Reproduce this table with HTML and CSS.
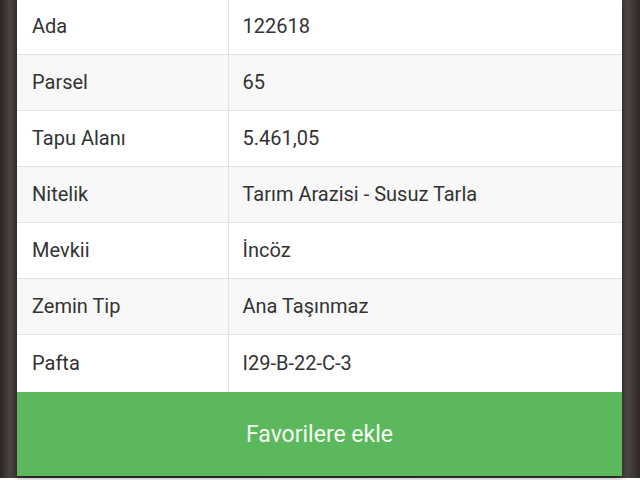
FILE: index.html
```html
<!DOCTYPE html>
<html lang="tr">
  <head>
    <meta charset="UTF-8" />
    <meta name="viewport" content="width=device-width, initial-scale=1.0" />
    <title>Parsel Bilgisi</title>
    <link rel="stylesheet" href="styles.css">
  </head>
  <body>
    <div class="backdrop">
      <div class="card">
        <table class="info-table">
          <tbody>
            <tr><td>Ada</td><td>122618</td></tr>
            <tr><td>Parsel</td><td>65</td></tr>
            <tr><td>Tapu Alanı</td><td>5.461,05</td></tr>
            <tr><td>Nitelik</td><td>Tarım Arazisi - Susuz Tarla</td></tr>
            <tr><td>Mevkii</td><td>İncöz</td></tr>
            <tr><td>Zemin Tip</td><td>Ana Taşınmaz</td></tr>
            <tr><td>Pafta</td><td>I29-B-22-C-3</td></tr>
          </tbody>
        </table>
        <button class="fav-btn">Favorilere ekle</button>
      </div>
    </div>
  </body>
</html>
```

FILE: styles.css
```css
* {
  margin: 0;
  padding: 0;
  box-sizing: border-box;
}

body {
  width: 640px;
  height: 480px;
  overflow: hidden;
  font-family: Roboto, "Noto Sans", sans-serif;
}

.backdrop {
  height: 480px;
  background: linear-gradient(90deg, #2a2523 0%, #4a433e 1.5%, #3a3430 3%, #3b3531 96%, #4d4641 98%, #2d2826 100%);
  padding-left: 17px;
}

.card {
  width: 605px;
  margin-top: -2px;
  background-color: white;
  box-shadow: 0 2px 6px rgba(0, 0, 0, 0.4);
}

.info-table {
  width: 100%;
  border-collapse: collapse;
}

.info-table td {
  height: 56px;
  padding: 0 15px 0 16px;
  font-size: 20px;
  color: #333;
  border-bottom: 1px solid #e3e3e3;
  vertical-align: middle;
}

.info-table td:first-child {
  width: 211px;
  padding-left: 15px;
  border-right: 1px solid #e3e3e3;
}

.info-table td:last-child {
  padding-left: 14px;
}

.info-table tr:nth-child(even) td {
  background-color: #f8f8f8;
}

.info-table tr:last-child td {
  height: 58px;
  border-bottom: none;
}

.fav-btn {
  display: block;
  width: 100%;
  height: 84px;
  border: none;
  background-color: #5cb85c;
  color: #f4fbf4;
  font-family: Roboto, "Noto Sans", sans-serif;
  font-size: 23px;
}
```
